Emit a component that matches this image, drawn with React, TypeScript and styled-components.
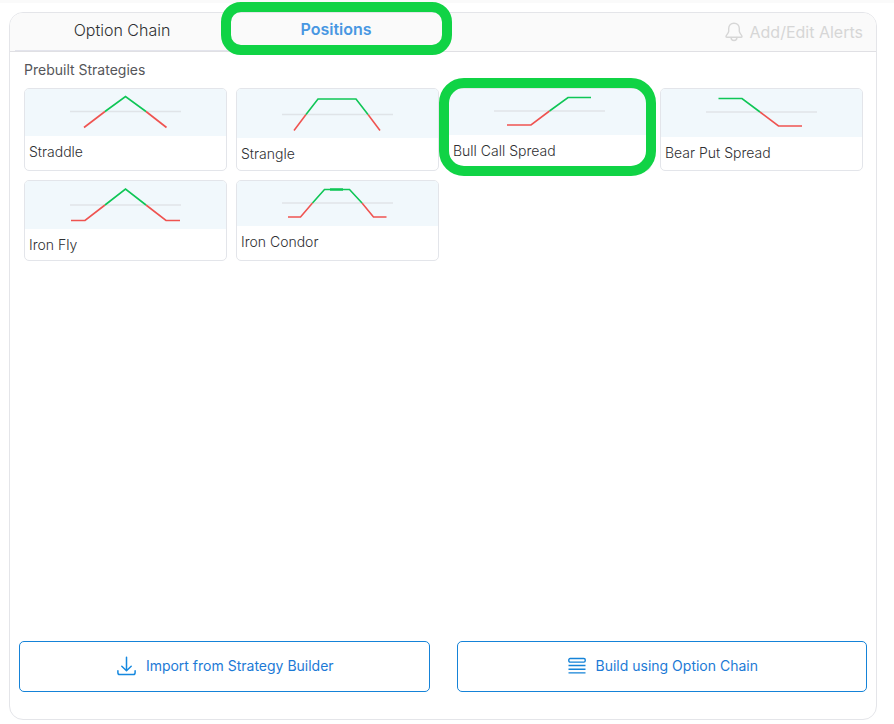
import React from "react";
import styled, { createGlobalStyle, css } from "styled-components";

const GlobalStyle = createGlobalStyle`
  *, *::before, *::after { box-sizing: border-box; }
  body {
    margin: 0;
    background: #fff;
    font-family: Inter, "Liberation Sans", sans-serif;
    color: #2f3033;
  }
  button { font: inherit; color: inherit; cursor: pointer; }
`;

const Page = styled.div`
  display: flex;
  flex-direction: column;
  min-height: 100vh;
`;

const TopStrip = styled.div`
  height: 3px;
  background: #fafafa;
`;

const Panel = styled.main`
  flex: 1;
  display: flex;
  flex-direction: column;
  margin: 9px 17px 4px 9px;
  border: 1px solid #e4e5e9;
  border-radius: 14px;
`;

const Header = styled.header`
  display: flex;
  justify-content: space-between;
  height: 39px;
  padding: 0 13px 0 5px;
  background: #fafafa;
  border-bottom: 1px solid #e0e0e4;
  border-radius: 13px 13px 0 0;
`;

const TabList = styled.div`
  display: flex;
  flex: 0 1 428px;
`;

const Tab = styled.button<{ $active?: boolean }>`
  position: relative;
  flex: 1;
  padding: 0 0 3px;
  border: 0;
  border-bottom: 1px solid #e3e4ec;
  background: none;
  font-size: 16px;
  line-height: 20px;
  font-weight: 300;
  ${(p) =>
    p.$active &&
    css`
      padding-bottom: 5px;
      color: #4897e2;
      font-weight: 600;
      border-bottom-color: transparent;
    `}
`;

const AlertsButton = styled.button`
  display: flex;
  align-items: center;
  gap: 7px;
  padding: 0 0 1px;
  border: 0;
  background: none;
  color: #d6d6d6;
  font-size: 16px;
  line-height: 20px;
`;

const Ring = styled.span<{ $card?: boolean }>`
  position: absolute;
  z-index: 1;
  pointer-events: none;
  border: 10px solid #10d345;
  inset: ${(p) => (p.$card ? "-11px -6px -6px -10px" : "-11px -9px -5px -8px")};
  border-radius: ${(p) => (p.$card ? "25px" : "20px")};
`;

const Section = styled.section`
  flex: 1;
  padding: 8px 13px 8px 14px;
`;

const SectionTitle = styled.h2`
  margin: 0 0 8px;
  font-size: 14px;
  line-height: 20px;
  font-weight: 400;
  color: #55565a;
`;

const StrategyGrid = styled.div`
  display: grid;
  grid-template-columns: repeat(4, 1fr);
  grid-template-rows: minmax(83px, auto) minmax(81px, auto);
  gap: 9px;
`;

const Card = styled.button`
  position: relative;
  display: flex;
  flex-direction: column;
  padding: 0;
  border: 1px solid #e3e5ea;
  border-radius: 5px;
  background: #fff;
  text-align: left;
`;

const ChartArea = styled.span`
  display: flex;
  justify-content: center;
  width: 100%;
  background: #f1f8fc;
  border-radius: 4px 4px 0 0;
`;

const CardLabel = styled.span`
  padding: 6px 4px 5px;
  font-size: 14px;
  line-height: 20px;
  font-weight: 300;
`;

const Actions = styled.footer`
  display: grid;
  grid-template-columns: 1fr 1fr;
  gap: 27px;
  padding: 0 9px 27px;
`;

const ActionButton = styled.button`
  display: flex;
  align-items: center;
  justify-content: center;
  gap: 10px;
  height: 51px;
  padding: 0 14px 1px 16px;
  border: 1px solid #1583d8;
  border-radius: 5px;
  background: #fff;
  color: #1c7ad6;
  font-size: 14px;
  line-height: 20px;
`;

type Strategy = {
  name: string;
  height: number;
  axis: number;
  gain: string;
  loss: string[];
  peak?: string;
  highlighted?: boolean;
};

const strategies: Strategy[] = [
  {
    name: "Straddle",
    height: 47,
    axis: 22.5,
    gain: "35,22.5 55.5,7.5 76,22.5",
    loss: ["14,38.5 35,22.5", "76,22.5 96.5,38.5"],
  },
  {
    name: "Strangle",
    height: 49,
    axis: 25.5,
    gain: "24,25.5 36,10 74,10 86,25.5",
    loss: ["12,41.5 24,25.5", "86,25.5 98,41.5"],
  },
  {
    name: "Bull Call Spread",
    height: 46,
    axis: 22,
    gain: "55.5,22 74,8.5 97,8.5",
    loss: ["13,36 37,36 55.5,22"],
    highlighted: true,
  },
  {
    name: "Bear Put Spread",
    height: 48,
    axis: 23,
    gain: "12.5,9.5 36,9.5 54,23",
    loss: ["54,23 72.5,37 96,37"],
  },
  {
    name: "Iron Fly",
    height: 48,
    axis: 24,
    gain: "35,24 55.5,8 76,24",
    loss: ["1,39.5 15,39.5 35,24", "76,24 96,39.5 110,39.5"],
  },
  {
    name: "Iron Condor",
    height: 45,
    axis: 22,
    gain: "30.5,22 42.5,8.5 67.5,8.5 80,22",
    loss: ["6,36 18.5,36 30.5,22", "80,22 91.5,36 104.5,36"],
    peak: "48,8.5 61,8.5",
  },
];

function PayoffChart({ height, axis, gain, loss, peak }: Strategy) {
  return (
    <ChartArea>
      <svg width="111" height={height} viewBox={`0 0 111 ${height}`} fill="none" strokeWidth="1.6" aria-hidden="true">
        <line x1="0" y1={axis} x2="111" y2={axis} stroke="#e0e4e8" strokeWidth="1.4" />
        {loss.map((points) => (
          <polyline key={points} points={points} stroke="#ef5350" />
        ))}
        <polyline points={gain} stroke="#0fc656" />
        {peak && <polyline points={peak} stroke="#0fc656" strokeWidth="2.4" />}
      </svg>
    </ChartArea>
  );
}

function BellIcon() {
  return (
    <svg width="18" height="20" viewBox="0 0 18 20" fill="none" stroke="currentColor" strokeWidth="1.4" strokeLinecap="round" strokeLinejoin="round" aria-hidden="true">
      <path d="M9 1.2C5.7 1.2 3.7 3.6 3.7 6.6V9.3C3.7 11.2 1 13.1 1 14.4C1 15 1.4 15.3 2.2 15.3H15.8C16.6 15.3 17 15 17 14.4C17 13.1 14.3 11.2 14.3 9.3V6.6C14.3 3.6 12.3 1.2 9 1.2Z" />
      <path d="M6.1 15.4C6.1 17.4 7.3 18.5 9 18.5C10.7 18.5 11.9 17.4 11.9 15.4" />
    </svg>
  );
}

function ImportIcon() {
  return (
    <svg width="19" height="20" viewBox="0 0 19 20" fill="none" stroke="#1588df" strokeWidth="1.5" strokeLinecap="round" strokeLinejoin="round" aria-hidden="true">
      <path d="M9.5 1.2V14.5M4.8 10.3L9.5 14.7L14.2 10.3" />
      <path d="M0.9 14.8V16.7C0.9 17.9 1.5 18.5 2.7 18.5H16.3C17.5 18.5 18.1 17.9 18.1 16.7V14.8" />
    </svg>
  );
}

function ChainIcon() {
  return (
    <svg width="18" height="18" viewBox="0 0 18 18" fill="none" stroke="#1583d8" strokeWidth="1.4" aria-hidden="true">
      <rect x="0.8" y="1.5" width="16.4" height="3.6" rx="1.3" />
      <path d="M0.5 8.5H17.5M0.5 12.2H17.5M0.5 15.9H17.5" />
    </svg>
  );
}

export default function App() {
  return (
    <>
      <GlobalStyle />
      <Page>
        <TopStrip />
        <Panel>
          <Header>
            <TabList role="tablist">
              <Tab role="tab" aria-selected={false}>Option Chain</Tab>
              <Tab role="tab" aria-selected={true} $active>
                Positions
                <Ring />
              </Tab>
            </TabList>
            <AlertsButton>
              <BellIcon />
              Add/Edit Alerts
            </AlertsButton>
          </Header>
          <Section>
            <SectionTitle>Prebuilt Strategies</SectionTitle>
            <StrategyGrid>
              {strategies.map((strategy) => (
                <Card key={strategy.name}>
                  <PayoffChart {...strategy} />
                  <CardLabel>{strategy.name}</CardLabel>
                  {strategy.highlighted && <Ring $card />}
                </Card>
              ))}
            </StrategyGrid>
          </Section>
          <Actions>
            <ActionButton>
              <ImportIcon />
              Import from Strategy Builder
            </ActionButton>
            <ActionButton>
              <ChainIcon />
              Build using Option Chain
            </ActionButton>
          </Actions>
        </Panel>
      </Page>
    </>
  );
}
